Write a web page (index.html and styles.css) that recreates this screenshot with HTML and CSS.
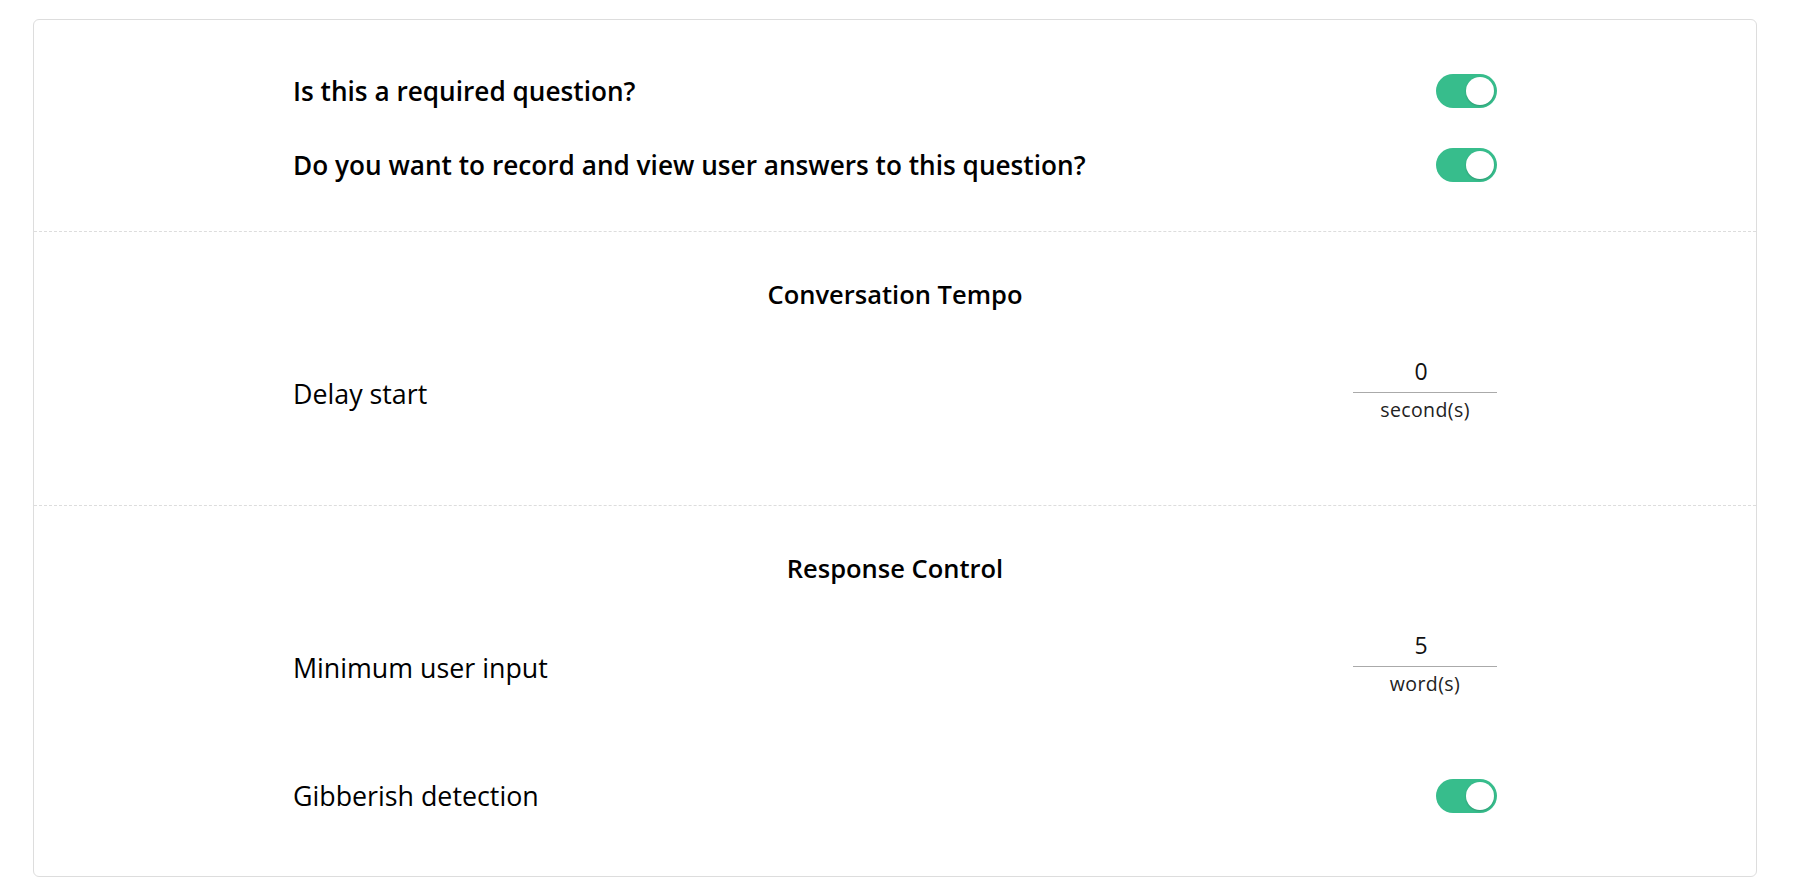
FILE: index.html
```html
<!DOCTYPE html>
<html>
<head>
<meta charset="utf-8">
<title>Question settings</title>
<link rel="stylesheet" href="styles.css">
</head>
<body>
<div class="page">
  <div class="card">
    <section class="section section-top">
      <div class="content">
        <div class="row row-toggle">
          <span class="label label-bold">Is this a required question?</span>
          <span class="toggle on"><span class="knob"></span></span>
        </div>
        <div class="row row-toggle">
          <span class="label label-bold">Do you want to record and view user answers to this question?</span>
          <span class="toggle on"><span class="knob"></span></span>
        </div>
      </div>
    </section>

    <section class="section">
      <div class="content">
        <h2 class="heading">Conversation Tempo</h2>
        <div class="row row-input">
          <span class="label label-input">Delay start</span>
          <div class="num">
            <div class="num-field">0</div>
            <div class="num-unit">second(s)</div>
          </div>
        </div>
      </div>
    </section>

    <section class="section section-last">
      <div class="content">
        <h2 class="heading">Response Control</h2>
        <div class="row row-input">
          <span class="label label-input">Minimum user input</span>
          <div class="num">
            <div class="num-field">5</div>
            <div class="num-unit">word(s)</div>
          </div>
        </div>
        <div class="row row-toggle row-gib">
          <span class="label">Gibberish detection</span>
          <span class="toggle on"><span class="knob"></span></span>
        </div>
      </div>
    </section>
  </div>
</div>
</body>
</html>
```
FILE: styles.css
```css
html, body {
  margin: 0;
  padding: 0;
  background: #ffffff;
}

body {
  font-family: "Open Sans", "Noto Sans", sans-serif;
  color: #000000;
}

.page {
  padding: 19px 47px 0 33px;
}

.card {
  border: 1px solid #dddddd;
  border-radius: 6px;
  background: #ffffff;
}

.section {
  border-bottom: 1px dashed #dddddd;
  padding: 47px 0 83px;
}

.section-top {
  padding: 51px 0 46px;
}

.section-last {
  border-bottom: none;
  padding-bottom: 60px;
}

.content {
  width: 1204px;
  margin: 0 auto;
}

.heading {
  margin: 0;
  font-size: 25.5px;
  line-height: 30px;
  font-weight: 600;
  text-align: center;
  color: #000000;
}

.row {
  display: flex;
  justify-content: space-between;
}

.row-toggle {
  align-items: center;
  height: 40px;
}

.row-toggle + .row-toggle {
  margin-top: 34px;
}

.row-input {
  align-items: flex-start;
  margin-top: 47px;
}

.row-gib {
  margin-top: 80px;
}

.label {
  font-size: 26.8px;
  line-height: 40px;
  font-weight: 400;
  color: #000000;
}

.label-bold {
  font-size: 26.2px;
  font-weight: 600;
}

.label-input {
  margin-top: 18px;
}

.toggle {
  position: relative;
  display: inline-block;
  width: 61px;
  height: 34px;
  border-radius: 17px;
  background: #37bd8c;
  flex: none;
}

.knob {
  position: absolute;
  top: 3px;
  right: 3px;
  width: 28px;
  height: 28px;
  border-radius: 50%;
  background: #ffffff;
  box-shadow: 0 1px 2px rgba(0, 0, 0, 0.18);
}

.num {
  width: 144px;
  flex: none;
  text-align: center;
}

.num-field {
  height: 30px;
  padding-bottom: 6px;
  padding-right: 8px;
  border-bottom: 1px solid #aaaaaa;
  font-size: 23px;
  line-height: 30px;
  font-weight: 400;
  color: #111111;
}

.num-unit {
  margin-top: 5px;
  font-size: 19.5px;
  line-height: 24px;
  font-weight: 400;
  letter-spacing: 0.4px;
  color: #222222;
}
```
